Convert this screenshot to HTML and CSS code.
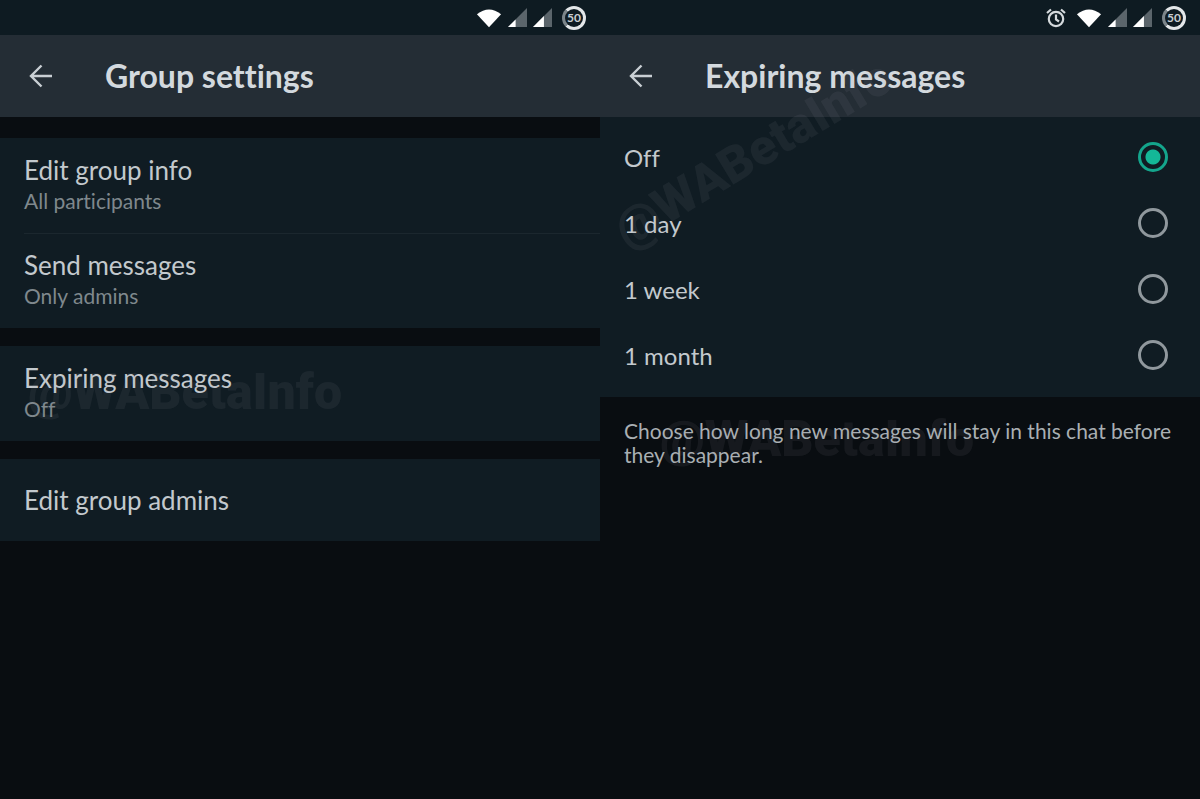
FILE: index.html
```
<!DOCTYPE html>
<html lang="en">
<head>
  <meta charset="UTF-8" />
  <meta name="viewport" content="width=device-width, initial-scale=1" />
  <title>Group settings</title>
  <link rel="stylesheet" href="styles.css">
</head>
<body>

<!-- Shared status bar icons -->
<svg class="sprite" aria-hidden="true">
  <symbol id="wifi" viewBox="0 0 28 20">
    <path d="M1 6 Q14 -4.500 27 6 L14 20 Z" fill="#fff"/>
  </symbol>
  <symbol id="signal" viewBox="0 0 20 20">
    <path d="M20 0 V20 H0 Z" fill="#5b656b"/>
    <path d="M8 12 V20 H0 Z" fill="#fff"/>
  </symbol>
  <symbol id="signal-more" viewBox="0 0 20 20">
    <path d="M20 0 V20 H0 Z" fill="#5b656b"/>
    <path d="M11.500 8.500 V20 H0 Z" fill="#fff"/>
  </symbol>
  <symbol id="alarm" viewBox="0 0 20 20">
    <circle cx="10" cy="11" r="7.200" fill="none" stroke="#d5dadd" stroke-width="2.200"/>
    <path d="M10 6.500 V11.500 L13 13.500 M1 5 L5 1.500 M19 5 L15 1.500" fill="none" stroke="#d5dadd" stroke-width="2.200"/>
  </symbol>
  <symbol id="back" viewBox="0 0 24 24">
    <path d="M23 12 H2 M12.500 1.500 L2 12 L12.500 22.500" fill="none" stroke="#c9cfd4" stroke-width="2.400"/>
  </symbol>
</svg>

<main class="screens">
  <!-- Group settings -->
  <section class="screen">
    <div class="status-bar">
      <svg class="wifi"><use href="#wifi"/></svg>
      <svg class="signal"><use href="#signal"/></svg>
      <svg class="signal"><use href="#signal-more"/></svg>
      <span class="battery">50</span>
    </div>
    <header class="app-bar">
      <button class="back" aria-label="Back"><svg><use href="#back"/></svg></button>
      <h1>Group settings</h1>
    </header>
    <div class="groups">
      <div class="group">
        <button class="row">
          <span class="label">Edit group info</span>
          <span class="value">All participants</span>
        </button>
        <button class="row">
          <span class="label">Send messages</span>
          <span class="value">Only admins</span>
        </button>
      </div>
      <div class="group">
        <button class="row">
          <span class="label">Expiring messages</span>
          <span class="value">Off</span>
        </button>
        <span class="watermark" aria-hidden="true">@WABetaInfo</span>
      </div>
      <div class="group">
        <button class="row single">
          <span class="label">Edit group admins</span>
        </button>
      </div>
    </div>
  </section>

  <!-- Expiring messages -->
  <section class="screen">
    <div class="status-bar">
      <svg class="alarm"><use href="#alarm"/></svg>
      <svg class="wifi"><use href="#wifi"/></svg>
      <svg class="signal"><use href="#signal"/></svg>
      <svg class="signal"><use href="#signal-more"/></svg>
      <span class="battery">50</span>
    </div>
    <header class="app-bar">
      <button class="back" aria-label="Back"><svg><use href="#back"/></svg></button>
      <h1>Expiring messages</h1>
    </header>
    <form class="options">
      <label class="option">Off <input type="radio" name="expire" value="off" checked></label>
      <label class="option">1 day <input type="radio" name="expire" value="day"></label>
      <label class="option">1 week <input type="radio" name="expire" value="week"></label>
      <label class="option">1 month <input type="radio" name="expire" value="month"></label>
      <span class="watermark tilted" aria-hidden="true">@WABetaInfo</span>
    </form>
    <div class="hint">
      <p>Choose how long new messages will stay in this chat before they disappear.</p>
      <span class="watermark" aria-hidden="true">@WABetaInfo</span>
    </div>
  </section>
</main>

</body>
</html>
```
FILE: styles.css
```
* { box-sizing: border-box; }
body {
  margin: 0;
  background-color: #090d11;
  color: #c3c9cd;
  font-family: Lato, "Open Sans", sans-serif;
  font-variant-ligatures: none;
}
button {
  border: none;
  background: none;
  color: inherit;
  font: inherit;
  padding: 0;
  cursor: pointer;
}
.sprite {
  position: absolute;
  width: 0;
  height: 0;
}
.screens {
  display: grid;
  grid-template-columns: 1fr 1fr;
  min-height: 100vh;
}
.screen {
  min-width: 0;
  overflow: hidden;
}

/* Status bar */
.status-bar {
  display: flex;
  align-items: center;
  justify-content: flex-end;
  gap: 6px;
  height: 35px;
  padding-right: 14px;
  background-color: #0e1b22;
}
.wifi {
  width: 26px;
  height: 20px;
}
.signal {
  width: 19px;
  height: 19px;
}
.alarm {
  width: 20px;
  height: 20px;
  margin-right: 4px;
}
.battery {
  width: 24px;
  height: 24px;
  margin-left: 4px;
  border: 3px solid #e4e7e9;
  border-left-color: #7c858a;
  border-radius: 50%;
  color: #c9ced1;
  font-size: 12px;
  font-weight: bold;
  line-height: 18px;
  display: flex;
  justify-content: center;
}

/* App bar */
.app-bar {
  display: flex;
  align-items: center;
  height: 82px;
  padding-left: 29px;
  background-color: #242d35;
}
.back {
  width: 24px;
  height: 24px;
}
.back svg {
  display: block;
  width: 24px;
  height: 24px;
}
.app-bar h1 {
  margin: 0 0 0 52px;
  color: #d3d9de;
  font-size: 32px;
  line-height: 36px;
}

/* Settings list */
.groups {
  display: flex;
  flex-direction: column;
  gap: 18px;
  padding-top: 21px;
}
.group {
  position: relative;
  background-color: #101c23;
}
.row {
  display: block;
  position: relative;
  width: 100%;
  padding: 15px 24px 18px;
  text-align: left;
}
.row + .row::before {
  content: "";
  position: absolute;
  top: 0;
  left: 24px;
  right: 0;
  border-top: 1px solid #1b272e;
}
.label {
  display: block;
  font-size: 26px;
  line-height: 34px;
}
.value {
  display: block;
  color: #7f888d;
  font-size: 21px;
  line-height: 28px;
}
.row.single {
  padding: 24px;
}

/* Radio list */
.options {
  position: relative;
  padding: 7px 0 9px;
  background-color: #101c23;
}
.option {
  display: flex;
  align-items: center;
  justify-content: space-between;
  height: 66px;
  padding: 0 32px 0 24px;
  font-size: 24px;
  cursor: pointer;
}
.option input {
  appearance: none;
  width: 30px;
  height: 30px;
  margin: 0;
  border: 3px solid #90989d;
  border-radius: 50%;
}
.option input:checked {
  border-color: #14a58c;
  background: radial-gradient(circle, #14b797 7px, transparent 8px);
}
.hint {
  position: relative;
  padding: 22px 24px;
  font-size: 21px;
  line-height: 24px;
  color: #a9afb3;
}
.hint p {
  margin: 0;
}

/* Watermarks over the panels */
.watermark {
  position: absolute;
  top: 18px;
  left: 28px;
  color: rgba(150, 160, 170, 0.09);
  font-family: Roboto, "Liberation Sans", sans-serif;
  font-size: 50px;
  font-weight: 900;
  line-height: 56px;
  pointer-events: none;
}
.watermark.tilted {
  top: 8px;
  left: -4px;
  transform: rotate(-31deg);
}
.hint .watermark {
  top: 14px;
  left: 60px;
}
```
